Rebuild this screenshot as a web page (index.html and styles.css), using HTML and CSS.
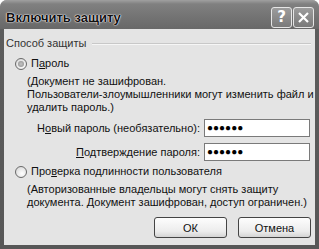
FILE: index.html
```html
<!DOCTYPE html>
<html lang="ru">
<head>
    <meta charset="UTF-8">
    <title>Включить защиту</title>
    <link rel="stylesheet" href="styles.css">
</head>
<body>
    <div class="ventana">
        <div class="titulo">
            <span class="titulo-texto">Включить защиту</span>
            <div class="titulo-botones">
                <div class="tbtn">?</div>
                <div class="tbtn">
                    <svg width="13" height="13" viewBox="0 0 13 13"><path d="M2 2 L11 11 M11 2 L2 11" stroke="#fff" stroke-width="2.2" fill="none"/></svg>
                </div>
            </div>
        </div>

        <div class="cuerpo">
            <div class="grupo">
                <span>Способ защиты</span>
                <div class="linea"></div>
            </div>

            <div class="opcion">
                <span class="radio marcado"></span>
                <span>П<u>а</u>роль</span>
            </div>
            <div class="nota">
                (Документ не зашифрован.<br>
                Пользователи-злоумышленники могут изменить файл и<br>
                удалить пароль.)
            </div>

            <div class="campos">
                <label>Н<u>о</u>вый пароль (необязательно):</label>
                <div class="caja">●●●●●●</div>
                <label><u>П</u>одтверждение пароля:</label>
                <div class="caja">●●●●●●</div>
            </div>

            <div class="opcion opcion2">
                <span class="radio"></span>
                <span>Про<u>в</u>ерка подлинности пользователя</span>
            </div>
            <div class="nota">
                (Авторизованные владельцы могут снять защиту<br>
                документа. Документ зашифрован, доступ ограничен.)
            </div>

            <div class="acciones">
                <button class="boton">ОК</button>
                <button class="boton">Отмена</button>
            </div>
        </div>
    </div>
</body>
</html>
```

FILE: styles.css
```css
body {
    margin: 0;
    background-color: #fff;
    font-family: "Liberation Sans", Arial, sans-serif;
    font-size: 11px;
    line-height: 13px;
    color: #111;
}

.ventana {
    width: 319px;
    height: 249px;
    display: flex;
    flex-direction: column;
    background: linear-gradient(#8a8a8a, #5c5c5c 30px, #575757);
    border-radius: 7px 7px 0 0;
    box-sizing: border-box;
}

.titulo {
    height: 24px;
    padding: 5px 5px 0 6px;
    display: flex;
    align-items: center;
    justify-content: space-between;
    background: linear-gradient(#a0a0a0, #808080 4px, #727272 18px, #686868 29px);
    border-radius: 7px 7px 0 0;
}

.titulo-texto {
    font-family: "Liberation Sans", Arial, sans-serif;
    font-weight: bold;
    font-size: 13px;
    color: #111;
    text-shadow: 0 0 1px #fff, 0 0 1px #fff, 0 0 2px #ddd;
}

.titulo-botones {
    display: flex;
    gap: 1px;
}

.tbtn {
    width: 19px;
    height: 19px;
    border: 1px solid #e6e6e6;
    border-radius: 3px;
    background: linear-gradient(#9c9c9c, #7a7a7a);
    color: #fff;
    font-family: "DejaVu Sans", sans-serif;
    font-weight: bold;
    font-size: 15px;
    display: flex;
    align-items: center;
    justify-content: center;
}

.cuerpo {
    flex: 1;
    margin: 0 4px 4px 4px;
    background-color: #e4e4e4;
    padding: 8px 4px 0 2px;
    display: flex;
    flex-direction: column;
}

.grupo {
    display: flex;
    align-items: center;
    gap: 6px;
    color: #333;
}

.linea {
    flex: 1;
    height: 0;
    border-top: 1px solid #c8c8c8;
    border-bottom: 1px solid #f6f6f6;
}

.opcion {
    display: flex;
    align-items: center;
    gap: 4px;
    padding-left: 9px;
    margin-top: 7px;
}

.opcion2 {
    margin-top: 4px;
}

.radio {
    width: 10px;
    height: 10px;
    border: 1px solid #6a6a6a;
    border-radius: 50%;
    background: radial-gradient(circle at 60% 65%, #fff, #d2d2d2);
    position: relative;
}

.marcado::after {
    content: "";
    position: absolute;
    left: 2px;
    top: 2px;
    width: 6px;
    height: 6px;
    border-radius: 50%;
    background: radial-gradient(#c4c4c4, #8a8a8a);
}

.nota {
    padding-left: 21px;
    margin-top: 5px;
    white-space: nowrap;
}

.campos {
    display: grid;
    grid-template-columns: 1fr 106px;
    column-gap: 4px;
    row-gap: 6px;
    align-items: center;
    margin-top: 5px;
    padding-right: 1px;
}

.campos label {
    text-align: right;
}

.caja {
    height: 16px;
    border: 1px solid #7a7a7a;
    background-color: #fff;
    font-size: 10px;
    line-height: 16px;
    padding-left: 2px;
    color: #000;
}

.acciones {
    display: flex;
    justify-content: flex-end;
    gap: 11px;
    margin-top: 8px;
}

.boton {
    width: 73px;
    height: 21px;
    border: 1px solid #444;
    border-radius: 3px;
    background: linear-gradient(#fdfdfd, #ececec 70%, #d4d4d4);
    font-family: "Liberation Sans", Arial, sans-serif;
    font-size: 11px;
    color: #111;
    padding: 0;
}
```
